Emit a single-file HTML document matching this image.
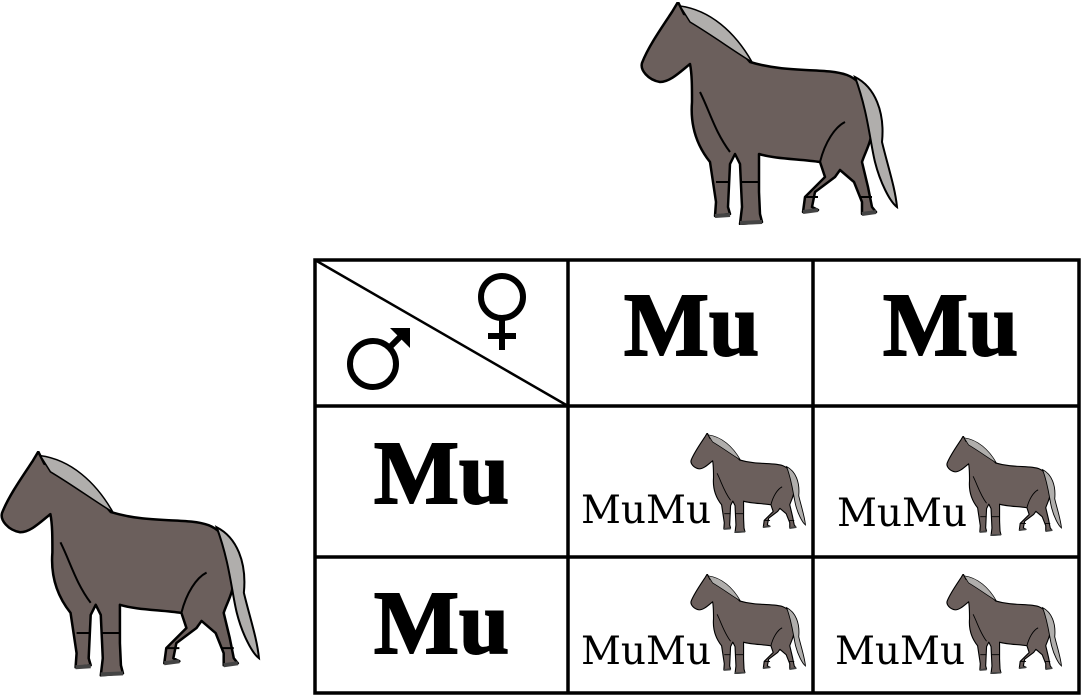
<!DOCTYPE html>
<html><head><meta charset="utf-8"><style>
html,body{margin:0;padding:0;background:#fff;}
body{width:1083px;height:697px;position:relative;overflow:hidden;font-family:"Liberation Serif",serif;}
.h{position:absolute;}
.t{position:absolute;color:#000;white-space:nowrap;line-height:1;}
.big{font-weight:bold;font-size:90px;-webkit-text-stroke:2px #000;}
.sm{font-family:"DejaVu Serif",serif;font-size:39px;}
</style></head><body>
<svg width="0" height="0" style="position:absolute">
<defs>
<symbol id="horse" viewBox="0 0 260 223">
<path d="M38,0 L44,12 C60,14 85,30 110,60 C150,72 185,65 207,73 C225,80 232,100 232,125 C232,140 225,150 222,160 L228,185 L232,205 L236,210 L222,212 L222,200 L214,180 L200,168 L195,175 L175,190 L172,205 L178,208 L163,210 L165,195 L185,175 L180,160 C160,157 135,157 119,152 L119,190 L120,212 L122,220 L100,222 L102,205 L100,162 L95,152 L90,162 L88,205 L90,212 L75,214 L76,200 L70,160 C58,145 50,125 52,100 C52,85 52,72 50,62 C40,70 30,80 20,80 C8,78 0,68 2,61 C8,45 22,25 32,10 Z" fill="#6b5f5c" stroke="#000" stroke-width="2.5" stroke-linejoin="round"/>
<path d="M215,75 C235,85 245,110 242,140 C248,165 255,185 257,205 C250,200 240,180 235,160 C230,140 228,110 215,75 Z" fill="#b0aeac" stroke="#000" stroke-width="2"/>
<path d="M40,4 C70,8 95,30 112,60 C95,50 75,35 50,20 Z" fill="#b0aeac" stroke="#000" stroke-width="1.5"/>
<path d="M76,180 L90,180 M101,180 L119,180 M165,195 L178,195 M220,195 L232,195 M60,90 C70,110 75,130 90,150 M180,160 C185,140 195,125 205,120" stroke="#000" stroke-width="2" fill="none"/>
<path d="M75,214 L90,213 M100,221 L122,220 M163,210 L178,208 M222,212 L236,210" stroke="#444" stroke-width="4"/>
</symbol>
</defs>
</svg>
<svg class="h" style="left:640px;top:2px" width="260" height="223"><use href="#horse"/></svg>
<svg class="h" style="left:0px;top:451px" width="262" height="226"><use href="#horse"/></svg>
<svg class="h" style="left:690px;top:433px" width="117" height="100"><use href="#horse"/></svg>
<svg class="h" style="left:946px;top:436px" width="117" height="100"><use href="#horse"/></svg>
<svg class="h" style="left:690px;top:574px" width="117" height="100"><use href="#horse"/></svg>
<svg class="h" style="left:946px;top:574px" width="117" height="100"><use href="#horse"/></svg>

<svg class="h" style="left:0;top:0" width="1083" height="697">
<g stroke="#000" stroke-width="3.5" fill="none">
<rect x="315" y="260" width="764" height="433"/>
<line x1="568" y1="260" x2="568" y2="693"/>
<line x1="813" y1="260" x2="813" y2="693"/>
<line x1="315" y1="406" x2="1079" y2="406"/>
<line x1="315" y1="557" x2="1079" y2="557"/>
<line x1="315" y1="260" x2="568" y2="406" stroke-width="2.5"/>
<circle cx="502" cy="297" r="21" stroke-width="6"/>
<line x1="502" y1="318" x2="502" y2="350" stroke-width="6"/>
<line x1="488" y1="336" x2="516" y2="336" stroke-width="6"/>
<circle cx="373" cy="364" r="23" stroke-width="6"/>
<line x1="389" y1="348" x2="406" y2="331" stroke-width="6"/>
</g>
<path d="M390,328 L410,328 L410,348 Z" fill="#000"/>
</svg>

<div class="t big" style="left:624px;top:281px">Mu</div>
<div class="t big" style="left:883px;top:281px">Mu</div>
<div class="t big" style="left:374px;top:429px">Mu</div>
<div class="t big" style="left:374px;top:579px">Mu</div>
<div class="t sm" style="left:581px;top:491px">MuMu</div>
<div class="t sm" style="left:837px;top:494px">MuMu</div>
<div class="t sm" style="left:581px;top:632px">MuMu</div>
<div class="t sm" style="left:835px;top:632px">MuMu</div>
</body></html>
